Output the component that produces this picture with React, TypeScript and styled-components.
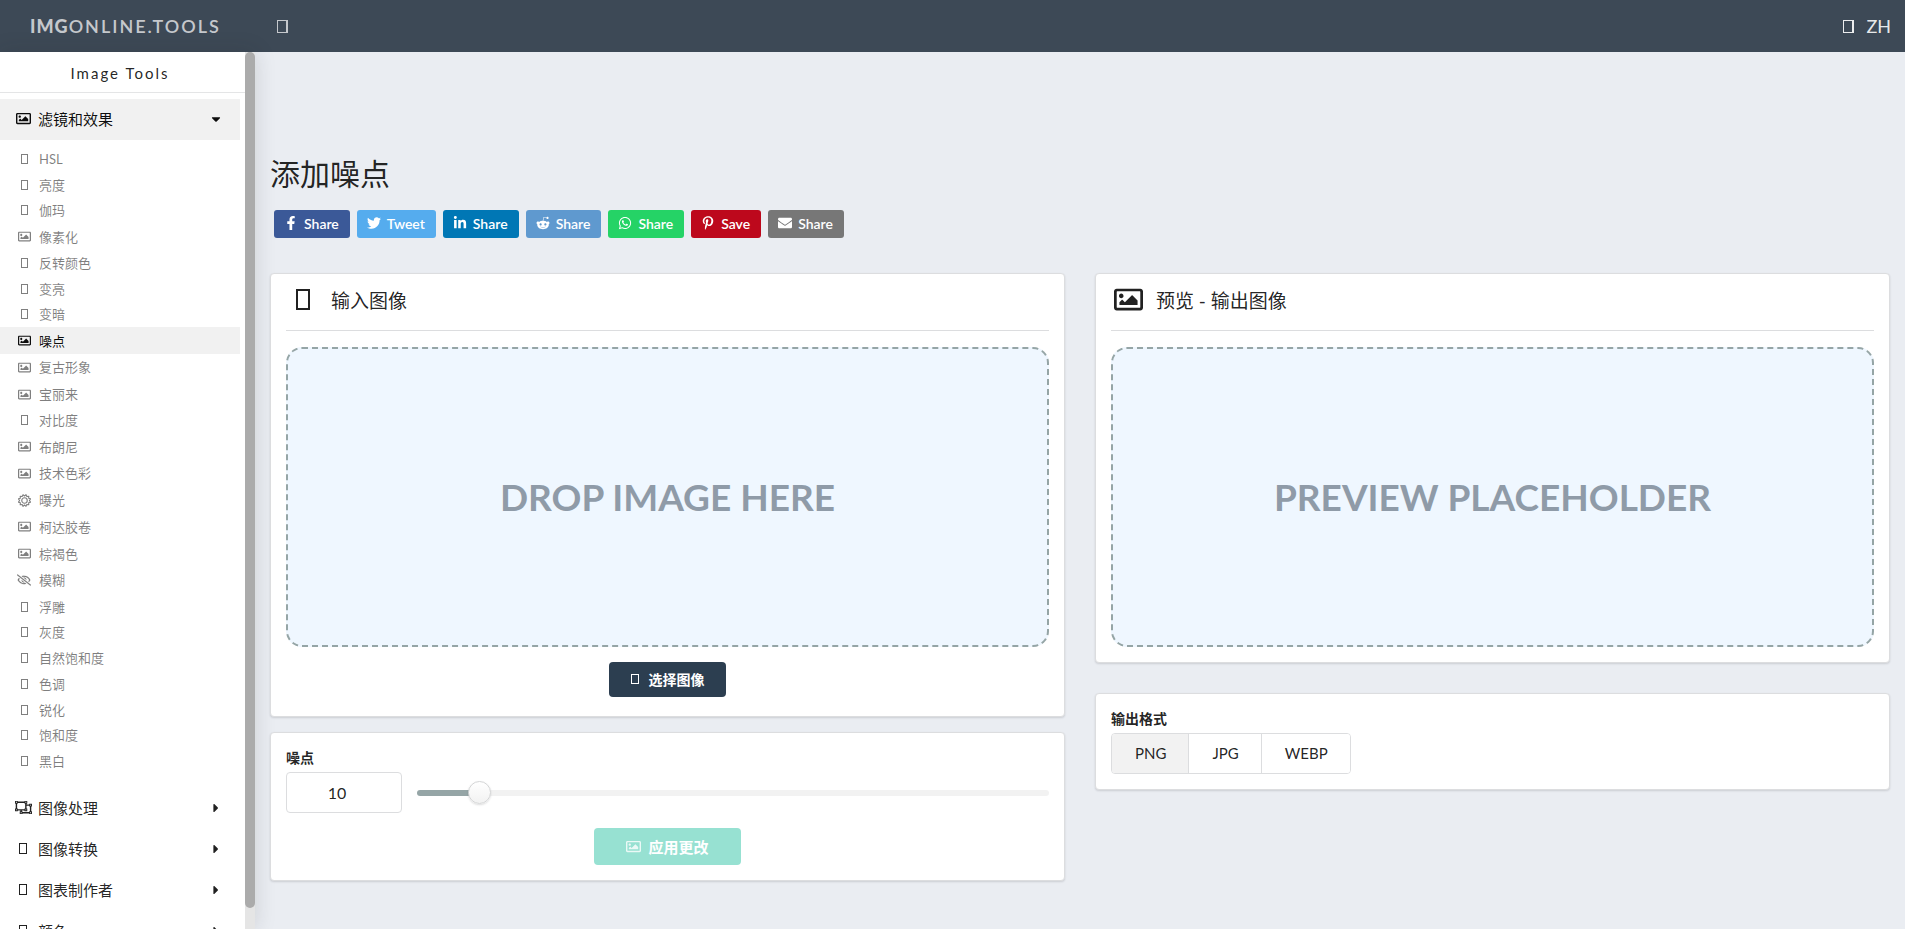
import React, { useState } from "react";
import styled, { createGlobalStyle, css } from "styled-components";
import { FaRegImage, FaRegObjectUngroup, FaFacebookF, FaTwitter, FaLinkedinIn, FaRedditAlien, FaWhatsapp, FaPinterestP, FaEnvelope, FaCaretDown, FaCaretRight, FaRegEyeSlash } from "react-icons/fa";

const Global = createGlobalStyle`
  * { box-sizing: border-box; }
  html, body { margin: 0; background: #eaedf2; overflow: hidden; }
  body, button, input {
    font-family: Lato, "Noto Sans CJK SC", sans-serif;
    font-size: 15px;
    color: rgba(0, 0, 0, 0.87);
  }
  button { cursor: pointer; }
  a { color: inherit; text-decoration: none; }
`;

const Page = styled.div`
  height: 100vh;
  display: flex;
  flex-direction: column;
`;

const TopBar = styled.header`
  flex: none;
  height: 52px;
  display: flex;
  align-items: center;
  background: #3d4956;
  color: rgba(255, 255, 255, 0.9);
  padding-right: 14px;
`;

const Logo = styled.a`
  width: 255px;
  padding-left: 30px;
  color: #c5c8cc;
  font-family: Lato, sans-serif;
  font-weight: 600;
  font-size: 18px;
  line-height: 20px;
  letter-spacing: 2px;
  b { font-weight: 900; letter-spacing: 1px; }
`;

const BarButton = styled.button`
  display: flex;
  align-items: center;
  gap: 12px;
  border: 0;
  padding: 0;
  background: none;
  color: inherit;
  font-size: 18px;
`;

const MenuToggle = styled(BarButton)`
  margin-left: 22px;
  margin-right: auto;
  color: #c5c8cc;
`;

const Glyph = styled.span<{ $w: number; $h: number; $b?: number }>`
  display: block;
  width: ${(p) => p.$w}px;
  height: ${(p) => p.$h}px;
  border: ${(p) => p.$b ?? 1}px solid currentColor;
`;

const BarGlyph = styled(Glyph)`
  border-width: 1px 2px 1px 1px;
`;

const Body = styled.div`
  flex: 1;
  min-height: 0;
  display: flex;
`;

const Sidebar = styled.aside`
  flex: none;
  width: 255px;
  display: flex;
  background: #fff;
  box-shadow: 0 0 20px rgba(34, 36, 38, 0.15);
`;

const SidebarContent = styled.div`
  flex: 1;
  overflow: hidden;
`;

const ScrollTrack = styled.div`
  width: 10px;
  background: #e5e5e5;
`;

const ScrollThumb = styled.div`
  height: calc(100% - 21px);
  border-radius: 5px;
  background: #ababab;
`;

const SidebarTitle = styled.div`
  height: 41px;
  padding-right: 5px;
  border-bottom: 1px solid #e4e5e6;
  text-align: center;
  font-size: 15px;
  line-height: 43px;
  letter-spacing: 2px;
`;

const Group = styled.button<{ $open?: boolean }>`
  width: 240px;
  height: 41px;
  display: flex;
  align-items: center;
  border: 0;
  padding: 0 17px 2px 14px;
  background: ${(p) => (p.$open ? "#f1f1f1" : "transparent")};
  color: ${(p) => (p.$open ? "rgba(0,0,0,.95)" : "rgba(0,0,0,.87)")};
  text-align: left;
`;

const GroupIcon = styled.span`
  width: 18px;
  margin-right: 6px;
  display: flex;
  justify-content: center;
`;

const Caret = styled.span`
  margin-left: auto;
  width: 14px;
  display: flex;
  justify-content: center;
`;

const Nav = styled.nav`
  padding-top: 6px;
`;

const ToolList = styled.ul`
  list-style: none;
  margin: 6px 0 14px;
  padding: 0;
  height: 628px;
  display: flex;
  flex-direction: column;
`;

const ToolItem = styled.li<{ $tall: boolean }>`
  flex: 0 1 ${(p) => (p.$tall ? 27 : 26)}px;
  width: 240px;
  min-height: 0;
  display: flex;
`;

const ToolLink = styled.a<{ $active: boolean }>`
  flex: 1;
  display: flex;
  align-items: center;
  padding-left: 16px;
  font-size: 13px;
  line-height: 20px;
  color: ${(p) => (p.$active ? "rgba(0,0,0,.95)" : "rgba(0,0,0,.5)")};
  background: ${(p) => (p.$active ? "#f1f1f1" : "transparent")};
`;

const ToolIcon = styled.span`
  width: 16px;
  margin-right: 7px;
  display: flex;
  justify-content: center;
`;

const Main = styled.main`
  flex: 1;
  min-width: 0;
  padding: 101px 15px 0;
`;

const Title = styled.h1`
  margin: 0;
  font-size: 30px;
  font-weight: 400;
  line-height: 40px;
`;

const ShareRow = styled.div`
  display: flex;
  gap: 7px;
  margin: 17px 0 35px 4px;
`;

const ShareLink = styled.a<{ $bg: string }>`
  height: 28px;
  display: flex;
  align-items: center;
  gap: 6px;
  padding: 0 11px 2px 10px;
  border-radius: 3px;
  background: ${(p) => p.$bg};
  color: #fff;
  font-size: 14px;
  font-weight: 600;
  svg { width: 14px; height: 14px; }
`;

const Columns = styled.div`
  display: grid;
  grid-template-columns: 1fr 1fr;
  align-items: start;
  gap: 30px;
`;

const Column = styled.div<{ $gap: number }>`
  display: grid;
  gap: ${(p) => p.$gap}px;
`;

const Card = styled.section<{ $bottom?: number }>`
  background: #fff;
  border: 1px solid #dcdddf;
  border-radius: 4px;
  box-shadow: 0 1px 2px rgba(34, 36, 38, 0.15);
  padding: 0 15px ${(p) => p.$bottom ?? 15}px;
`;

const CardHead = styled.h2`
  height: 57px;
  margin: 0 0 16px;
  padding-bottom: 6px;
  border-bottom: 1px solid #dcdddf;
  display: flex;
  align-items: center;
  font-size: 19px;
  font-weight: 400;
`;

const HeadIcon = styled.span`
  width: 34px;
  margin-right: 11px;
  display: flex;
  justify-content: center;
`;

const Drop = styled.div`
  height: 300px;
  padding-bottom: 2px;
  border: 2px dashed #95a5a6;
  border-radius: 16px;
  background: #eff7ff;
  display: flex;
  align-items: center;
  justify-content: center;
  color: #8f9ba8;
  font-size: 37px;
  font-weight: 700;
`;

const Centered = styled.div`
  display: flex;
  justify-content: center;
  margin-top: 15px;
`;

const actionText = css`
  border: 0;
  border-radius: 4px;
  display: flex;
  align-items: center;
  justify-content: center;
  color: #fff;
  font-weight: 700;
`;

const PickButton = styled.button`
  ${actionText}
  width: 117px;
  height: 35px;
  gap: 10px;
  padding-bottom: 3px;
  background: #2c3e50;
  font-size: 14px;
`;

const ApplyButton = styled.button`
  ${actionText}
  width: 147px;
  height: 37px;
  gap: 7px;
  padding-bottom: 2px;
  background: #97e1d2;
  font-size: 15px;
  svg { opacity: 0.8; }
`;

const Label = styled.label`
  display: block;
  padding-top: 15px;
  font-size: 14px;
  font-weight: 700;
  line-height: 20px;
`;

const FieldRow = styled.div`
  display: flex;
  align-items: center;
  gap: 15px;
  margin-top: 4px;
`;

const NumberBox = styled.input`
  width: 116px;
  height: 41px;
  border: 1px solid #dcdddf;
  border-radius: 4px;
  padding: 0 14px 0 0;
  text-align: center;
  font-size: 16px;
`;

const SliderBox = styled.div`
  flex: 1;
  display: grid;
  align-items: center;
  > * { grid-area: 1 / 1; }
`;

const SliderTrack = styled.div<{ $value: number }>`
  height: 6px;
  border-radius: 3px;
  background: linear-gradient(to right, #95a5a6 ${(p) => p.$value}%, #f2f2f2 ${(p) => p.$value}%);
`;

const Slider = styled.input`
  appearance: none;
  height: 24px;
  margin: 0 -12px;
  background: transparent;
  &::-webkit-slider-thumb {
    appearance: none;
    width: 23px;
    height: 23px;
    border-radius: 50%;
    border: 1px solid #d4d5d6;
    background: linear-gradient(#fff, #f2f2f2);
    box-shadow: 0 1px 2px rgba(34, 36, 38, 0.15);
  }
`;

const Formats = styled.div`
  display: inline-flex;
  margin-top: 4px;
  border: 1px solid #dcdddf;
  border-radius: 4px;
  overflow: hidden;
`;

const FormatButton = styled.button<{ $active: boolean }>`
  height: 39px;
  border: 0;
  padding: 0 22px 1px 23px;
  background: ${(p) => (p.$active ? "#f2f2f2" : "#fff")};
  & + & { border-left: 1px solid #dcdddf; }
`;

type Icon = "box" | "image" | "sun" | "hidden";

const tools: [string, Icon][] = [
  ["HSL", "box"], ["亮度", "box"], ["伽玛", "box"], ["像素化", "image"], ["反转颜色", "box"],
  ["变亮", "box"], ["变暗", "box"], ["噪点", "image"], ["复古形象", "image"], ["宝丽来", "image"],
  ["对比度", "box"], ["布朗尼", "image"], ["技术色彩", "image"], ["曝光", "sun"], ["柯达胶卷", "image"],
  ["棕褐色", "image"], ["模糊", "hidden"], ["浮雕", "box"], ["灰度", "box"], ["自然饱和度", "box"],
  ["色调", "box"], ["锐化", "box"], ["饱和度", "box"], ["黑白", "box"],
];

const SunIcon = () => (
  <svg width="13" height="13" viewBox="0 0 26 26" fill="none" stroke="currentColor" strokeWidth="2.2">
    <circle cx="13" cy="13" r="5.5" />
    <path strokeLinejoin="round" d="M13 4l3-2.6 1.7 3.7 3.9-.7-.3 4 3.8 1.3-2.3 3.3 2.3 3.3-3.8 1.3.3 4-3.9-.7-1.7 3.7-3-2.6-3 2.6-1.7-3.7-3.9.7.3-4L.9 16.300l2.300-3.300L.9 9.700l3.800-1.300-.3-4 3.900.7L10 1.400z" />
  </svg>
);

const ToolGlyph = ({ kind }: { kind: Icon }) => {
  if (kind === "image") return <FaRegImage size={13} />;
  if (kind === "sun") return <SunIcon />;
  if (kind === "hidden") return <FaRegEyeSlash size={14} strokeWidth={8} />;
  return <Glyph $w={7} $h={10} />;
};

const shares = [
  { text: "Share", bg: "#3b5998", icon: <FaFacebookF /> },
  { text: "Tweet", bg: "#55acee", icon: <FaTwitter /> },
  { text: "Share", bg: "#0077b5", icon: <FaLinkedinIn /> },
  { text: "Share", bg: "#5f99cf", icon: <FaRedditAlien /> },
  { text: "Share", bg: "#25d366", icon: <FaWhatsapp /> },
  { text: "Save", bg: "#bd081c", icon: <FaPinterestP /> },
  { text: "Share", bg: "#777777", icon: <FaEnvelope /> },
];

export default function App() {
  const [noise, setNoise] = useState(10);
  const [format, setFormat] = useState("PNG");
  return (
    <Page>
      <Global />
      <TopBar>
        <Logo href="#"><b>IMG</b>ONLINE.TOOLS</Logo>
        <MenuToggle aria-label="Menu"><BarGlyph $w={11} $h={13} /></MenuToggle>
        <BarButton><BarGlyph $w={11} $h={13} />ZH</BarButton>
      </TopBar>
      <Body>
        <Sidebar>
          <SidebarContent>
            <SidebarTitle>Image Tools</SidebarTitle>
            <Nav>
              <Group $open>
                <GroupIcon><FaRegImage size={15} /></GroupIcon>滤镜和效果
                <Caret><FaCaretDown size={14} /></Caret>
              </Group>
              <ToolList>
                {tools.map(([name, icon]) => (
                  <ToolItem key={name} $tall={icon !== "box"}>
                    <ToolLink href="#" $active={name === "噪点"}>
                      <ToolIcon><ToolGlyph kind={icon} /></ToolIcon>{name}
                    </ToolLink>
                  </ToolItem>
                ))}
              </ToolList>
              {["图像处理", "图像转换", "图表制作者", "颜色"].map((name, i) => (
                <Group key={name}>
                  <GroupIcon>{i === 0 ? <FaRegObjectUngroup size={17} /> : <Glyph $w={8} $h={11} />}</GroupIcon>
                  {name}
                  <Caret><FaCaretRight size={14} /></Caret>
                </Group>
              ))}
            </Nav>
          </SidebarContent>
          <ScrollTrack><ScrollThumb /></ScrollTrack>
        </Sidebar>
        <Main>
          <Title>添加噪点</Title>
          <ShareRow>
            {shares.map((s) => (
              <ShareLink key={s.bg} href="#" $bg={s.bg}>{s.icon}{s.text}</ShareLink>
            ))}
          </ShareRow>
          <Columns>
            <Column $gap={15}>
              <Card $bottom={19}>
                <CardHead><HeadIcon><Glyph $w={14} $h={21} $b={2} /></HeadIcon>输入图像</CardHead>
                <Drop>DROP IMAGE HERE</Drop>
                <Centered><PickButton><Glyph $w={8} $h={10} />选择图像</PickButton></Centered>
              </Card>
              <Card>
                <Label htmlFor="noise">噪点</Label>
                <FieldRow>
                  <NumberBox id="noise" value={noise} onChange={(e) => setNoise(Number(e.target.value) || 0)} />
                  <SliderBox>
                    <SliderTrack $value={noise} />
                    <Slider type="range" aria-label="噪点" min={0} max={100} value={noise}
                      onChange={(e) => setNoise(Number(e.target.value))} />
                  </SliderBox>
                </FieldRow>
                <Centered><ApplyButton><FaRegImage size={15} />应用更改</ApplyButton></Centered>
              </Card>
            </Column>
            <Column $gap={30}>
              <Card>
                <CardHead><HeadIcon><FaRegImage size={29} /></HeadIcon>预览 - 输出图像</CardHead>
                <Drop>PREVIEW PLACEHOLDER</Drop>
              </Card>
              <Card>
                <Label as="div" id="format">输出格式</Label>
                <Formats role="group" aria-labelledby="format">
                  {["PNG", "JPG", "WEBP"].map((f) => (
                    <FormatButton key={f} $active={f === format} onClick={() => setFormat(f)}>{f}</FormatButton>
                  ))}
                </Formats>
              </Card>
            </Column>
          </Columns>
        </Main>
      </Body>
    </Page>
  );
}
